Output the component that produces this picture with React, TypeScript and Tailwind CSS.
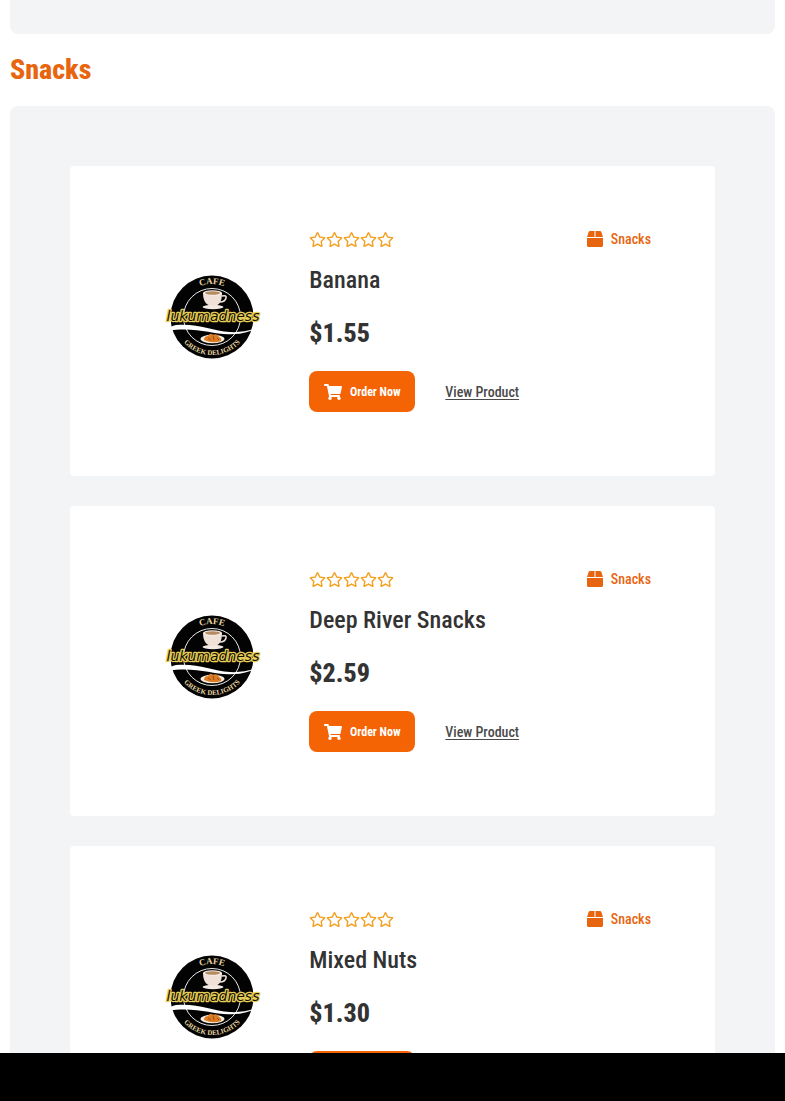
import React from 'react';
import { FaBox, FaRegStar, FaShoppingCart } from 'react-icons/fa';

type Product = {
  id: number;
  name: string;
  price: number;
  category: string;
};

const products: Product[] = [
  { id: 1, name: 'Banana', price: 1.55, category: 'Snacks' },
  { id: 2, name: 'Deep River Snacks', price: 2.59, category: 'Snacks' },
  { id: 3, name: 'Mixed Nuts', price: 1.3, category: 'Snacks' },
];

function CafeLogo({ id }: { id: number }) {
  return (
    <svg viewBox="0 0 100 100" className="w-[100px] h-[100px]" role="img" aria-label="Cafe Lukumadness, Greek Delights">
      <defs>
        <path id={`top-${id}`} d="M 17 50 A 33 33 0 0 1 83 50" />
        <path id={`bottom-${id}`} d="M 12 50 A 38 38 0 0 0 88 50" />
      </defs>
      <circle cx="50" cy="50" r="41.5" fill="#030303" />
      <circle cx="50" cy="50" r="28.5" fill="none" stroke="#e8e8e8" strokeWidth="1" />

      {/* Ring lettering */}
      <g fill="#e6d6a0" fontFamily="'Liberation Serif', 'Times New Roman', serif" fontWeight="700" textAnchor="middle">
        <text fontSize="9"><textPath href={`#top-${id}`} startOffset="50%">CAFE</textPath></text>
        <text fontSize="7"><textPath href={`#bottom-${id}`} startOffset="50%">GREEK DELIGHTS</textPath></text>
      </g>

      {/* Coffee cup */}
      <ellipse cx="51" cy="40" rx="10.5" ry="2.2" fill="#f3e9e2" />
      <path d="M41 26 C41 35 45 39 51 39 C57 39 60 35 60 26 Z" fill="#f0e1d8" />
      <path d="M60 29 Q65 28 64 31 Q63 35 58 35" fill="none" stroke="#f0e1d8" strokeWidth="1.6" />
      <ellipse cx="50.5" cy="26" rx="9.5" ry="2.8" fill="#f7eee8" />
      <ellipse cx="50.5" cy="26" rx="7.5" ry="1.8" fill="#b58b62" />

      {/* Swoosh */}
      <path d="M5 64 Q8 59 14 58 C36 56 50 64 68 65 Q80 66 95 61 Q84 67 72 67 C52 69 36 59 5 64 Z" fill="#fff" />

      {/* Plate of loukoumades */}
      <ellipse cx="50.5" cy="72" rx="12" ry="4.2" fill="#f6eee2" />
      <path d="M42 73 Q42 69 46 69 Q48 65 51 68 Q56 66 57 70 Q60 71 59 74 Q51 77 42 73 Z" fill="#dc7d24" />
      <path d="M46 71 L49 73 M51 69 L52 73 M55 71 L57 73" stroke="#8d3d12" strokeWidth="0.8" />

      <text
        x="51"
        y="54"
        textAnchor="middle"
        fontFamily="'DejaVu Sans', sans-serif"
        fontSize="14"
        fontStyle="italic"
        fill="#15110a"
        stroke="#e9cf55"
        strokeWidth="2.6"
        strokeLinejoin="round"
        paintOrder="stroke"
      >
        lukumadness
      </text>
    </svg>
  );
}

function ProductCard({ product }: { product: Product }) {
  return (
    <article className="grid grid-cols-[5fr_11fr] gap-5 rounded bg-white p-16">
      <div className="flex items-center justify-center pb-2">
        <CafeLogo id={product.id} />
      </div>

      <div className="min-w-0">
        <div className="flex items-center justify-between h-[18px]">
          <div className="flex text-[#f4a020]" role="img" aria-label="Not rated yet">
            {[1, 2, 3, 4, 5].map((n) => (
              <FaRegStar key={n} className="w-[17px] h-[15px]" />
            ))}
          </div>
          <span className="flex items-center gap-2 text-sm leading-4 font-medium text-[#e8650f]">
            <FaBox className="w-4 h-4" />
            {product.category}
          </span>
        </div>

        <h3 className="mt-4 text-2xl leading-8 font-medium text-[#333]">{product.name}</h3>
        <p className="mt-5 text-[26px] leading-[35px] font-extrabold text-[#333]">${product.price.toFixed(2)}</p>

        <div className="mt-5 flex items-center gap-[30px]">
          <button
            type="button"
            className="flex h-[41px] w-[106px] shrink-0 items-center justify-center gap-2 rounded-lg bg-[#f56404] text-xs font-bold text-white cursor-pointer whitespace-nowrap"
          >
            <FaShoppingCart className="w-[18px] h-4 shrink-0" />
            Order Now
          </button>
          <a href="#product" className="text-sm font-medium text-[#4a4a4a] underline underline-offset-2 whitespace-nowrap">
            View Product
          </a>
        </div>
      </div>
    </article>
  );
}

export default function App() {
  return (
    <div className="flex h-screen flex-col bg-white font-['Roboto_Condensed','Liberation_Sans_Narrow','Liberation_Sans',sans-serif]">
      <main className="min-h-0 flex-1 overflow-y-auto px-2.5 [scrollbar-width:none]">
        {/* End of the previous category */}
        <section className="h-[34px] rounded-b-lg bg-[#f3f4f6]" />

        <h2 className="py-4 text-[28px] leading-10 font-extrabold text-[#e8650f]">Snacks</h2>

        <section className="flex flex-col gap-[30px] rounded-lg bg-[#f3f4f6] p-[60px]">
          {products.map((product) => (
            <ProductCard key={product.id} product={product} />
          ))}
        </section>
      </main>

      <footer className="h-12 shrink-0 bg-black" />
    </div>
  );
}
